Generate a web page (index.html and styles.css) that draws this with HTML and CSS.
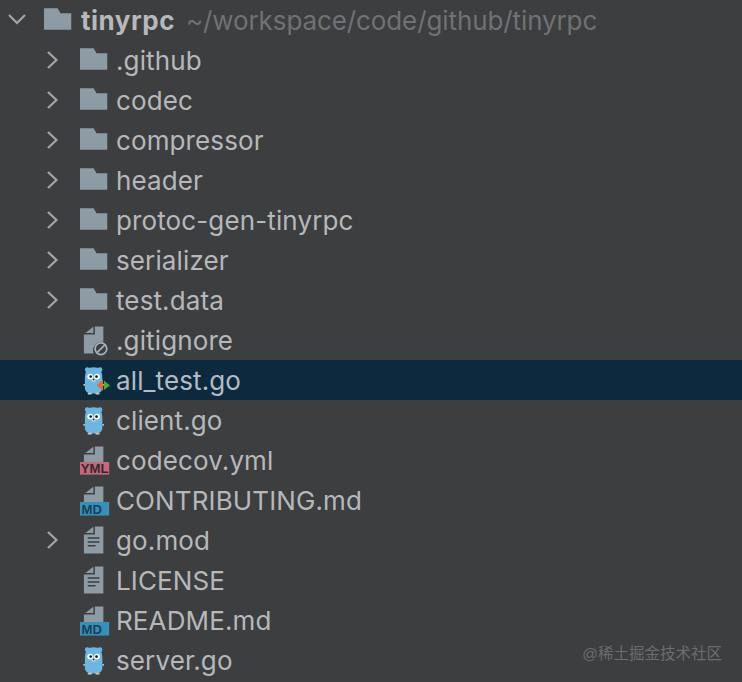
FILE: index.html
```html
<!DOCTYPE html>
<html lang="en">
	<head>
		<meta charset="utf-8"/>
		<title>tinyrpc</title>
		<link rel="stylesheet" href="styles.css">
	</head>
	<body>
		<svg class="defs" width="0" height="0">
			<defs>
				<symbol id="down" viewBox="0 0 44 40"><path d="M9 15 L17 23 L25 15" fill="none" stroke="#a4a7a9" stroke-width="2.2"/></symbol>
				<symbol id="right" viewBox="0 0 44 40"><path d="M12 12 L20.500 20 L12 28" fill="none" stroke="#a4a7a9" stroke-width="2.2"/></symbol>
				<symbol id="folder" viewBox="0 0 37 40"><path d="M0 8 H14 L17 13 H28 V30 H0 Z" fill="#8d9ba4"/></symbol>
				<symbol id="ignore" viewBox="0 0 37 40">
					<path d="M4 14 L14 6 H24 V22 A9 9 0 0 0 14 34 H4 Z" fill="#8d9ba4"/>
					<path d="M3 13.500 H14.500 V5" fill="none" stroke="#3d3e40" stroke-width="1.500"/>
					<circle cx="21.500" cy="29" r="6" fill="none" stroke="#a3b0b8" stroke-width="1.800"/>
					<path d="M17.500 33 L25.500 25" stroke="#a3b0b8" stroke-width="1.800"/>
				</symbol>
				<symbol id="text" viewBox="0 0 37 40">
					<path d="M4 14 L14 6 H24 V34 H4 Z" fill="#8d9ba4"/>
					<path d="M3 13.500 H14.500 V5" fill="none" stroke="#3d3e40" stroke-width="1.500"/>
					<path d="M8 18 H20 M8 22 H20 M8 26 H16" stroke="#3d3e40" stroke-width="1.600"/>
				</symbol>
				<symbol id="yml" viewBox="0 0 37 40">
					<path d="M4 14 L14 6 H24 V22 H4 Z" fill="#8d9ba4"/>
					<path d="M3 13.500 H14.500 V5" fill="none" stroke="#3d3e40" stroke-width="1.500"/>
					<rect x="0" y="22" width="30" height="13" fill="#c4687d"/>
					<text x="15" y="33.500" text-anchor="middle" class="badge" fill="#33282c">YML</text>
				</symbol>
				<symbol id="md" viewBox="0 0 37 40">
					<path d="M4 14 L14 6 H24 V22 H4 Z" fill="#8d9ba4"/>
					<path d="M3 13.500 H14.500 V5" fill="none" stroke="#3d3e40" stroke-width="1.500"/>
					<rect x="0" y="22" width="30" height="14" fill="#3a8fb7"/>
					<text x="12" y="34" text-anchor="middle" class="badge" fill="#173f5c">MD</text>
				</symbol>
				<symbol id="gopher" viewBox="0 0 37 40">
					<circle cx="7.500" cy="9.500" r="2.500" fill="#6cb6e2"/>
					<circle cx="20.500" cy="9.500" r="2.500" fill="#6cb6e2"/>
					<path d="M5 19 C5 10 8 7 14 7 C20 7 23 10 23 19 V28 C23 32 20 34 14 34 C8 34 5 32 5 28 Z" fill="#6cb6e2"/>
					<path d="M5 26 H3.500 V24 H5 Z M23 26 H24.500 V24 H23 Z M8 33 H12 V35 H8 Z M16 33 H20 V35 H16 Z" fill="#d8c9a8"/>
					<circle cx="10.500" cy="16.500" r="3" fill="#fff"/>
					<circle cx="17.500" cy="16.500" r="3" fill="#fff"/>
					<circle cx="11" cy="16.500" r="1.400" fill="#1c1c1c"/>
					<circle cx="17" cy="16.500" r="1.400" fill="#1c1c1c"/>
					<ellipse cx="14" cy="20.500" rx="2" ry="1.300" fill="#e4d6b8"/>
					<circle cx="14" cy="19.800" r="0.800" fill="#222"/>
				</symbol>
			</defs>
		</svg>

		<ul class="tree">
			<li class="row root">
				<svg class="arrow"><use href="#down"/></svg>
				<svg class="icon"><use href="#folder"/></svg>
				<span class="name">tinyrpc</span><span class="path">~/workspace/code/github/tinyrpc</span>
			</li>
			<li class="row">
				<svg class="arrow"><use href="#right"/></svg>
				<svg class="icon"><use href="#folder"/></svg>
				<span>.github</span>
			</li>
			<li class="row">
				<svg class="arrow"><use href="#right"/></svg>
				<svg class="icon"><use href="#folder"/></svg>
				<span>codec</span>
			</li>
			<li class="row">
				<svg class="arrow"><use href="#right"/></svg>
				<svg class="icon"><use href="#folder"/></svg>
				<span>compressor</span>
			</li>
			<li class="row">
				<svg class="arrow"><use href="#right"/></svg>
				<svg class="icon"><use href="#folder"/></svg>
				<span>header</span>
			</li>
			<li class="row">
				<svg class="arrow"><use href="#right"/></svg>
				<svg class="icon"><use href="#folder"/></svg>
				<span>protoc-gen-tinyrpc</span>
			</li>
			<li class="row">
				<svg class="arrow"><use href="#right"/></svg>
				<svg class="icon"><use href="#folder"/></svg>
				<span>serializer</span>
			</li>
			<li class="row">
				<svg class="arrow"><use href="#right"/></svg>
				<svg class="icon"><use href="#folder"/></svg>
				<span>test.data</span>
			</li>
			<li class="row">
				<svg class="arrow"></svg>
				<svg class="icon"><use href="#ignore"/></svg>
				<span>.gitignore</span>
			</li>
			<li class="row selected">
				<svg class="arrow"></svg>
				<svg class="icon" viewBox="0 0 36 40">
					<use href="#gopher" width="36" height="40"/>
					<path d="M23 19.500 L16.500 25 L23 31 Z" fill="#e0703a"/>
					<path d="M24 20.500 L30 25.500 L24 30 Z" fill="#4fa83d"/>
				</svg>
				<span>all_test.go</span>
			</li>
			<li class="row">
				<svg class="arrow"></svg>
				<svg class="icon"><use href="#gopher"/></svg>
				<span>client.go</span>
			</li>
			<li class="row">
				<svg class="arrow"></svg>
				<svg class="icon"><use href="#yml"/></svg>
				<span>codecov.yml</span>
			</li>
			<li class="row">
				<svg class="arrow"></svg>
				<svg class="icon"><use href="#md"/></svg>
				<span>CONTRIBUTING.md</span>
			</li>
			<li class="row">
				<svg class="arrow"><use href="#right"/></svg>
				<svg class="icon"><use href="#text"/></svg>
				<span>go.mod</span>
			</li>
			<li class="row">
				<svg class="arrow"></svg>
				<svg class="icon"><use href="#text"/></svg>
				<span>LICENSE</span>
			</li>
			<li class="row">
				<svg class="arrow"></svg>
				<svg class="icon"><use href="#md"/></svg>
				<span>README.md</span>
			</li>
			<li class="row">
				<svg class="arrow"></svg>
				<svg class="icon"><use href="#gopher"/></svg>
				<span>server.go</span>
			</li>
		</ul>

		<div class="watermark">@稀土掘金技术社区</div>
	</body>
</html>
```

FILE: styles.css
```css
html, body {
	width: 100%; height: 100%;
	padding: 0; border: 0; margin: 0;
	background: #3d3e40;
	overflow: hidden;
}
.defs {
	display: block;
	height: 0;
}
.tree {
	list-style: none;
	margin: 0;
	padding: 0;
	font-family: "Inter", "Liberation Sans", sans-serif;
	font-size: 26px;
	letter-spacing: 0.12px;
	color: #b6b8ba;
}
.row {
	display: flex;
	align-items: center;
	height: 40px;
	padding-left: 36px;
	white-space: nowrap;
}
.root {
	padding-left: 0;
}
.selected {
	background: #0d293e;
	color: #b3bcc4;
}
.arrow {
	flex: none;
	width: 44px;
	height: 40px;
}
.icon {
	flex: none;
	width: 36px;
	height: 40px;
}
.name {
	margin-left: 1px;
	font-weight: 700;
	letter-spacing: 0.5px;
}
.path {
	margin-left: 11px;
	color: #707274;
	letter-spacing: -0.1px;
}
.badge {
	font-family: "Liberation Sans", sans-serif;
	font-size: 13.500px;
	font-weight: 700;
	letter-spacing: 0;
}
.watermark {
	position: absolute;
	right: 20px;
	bottom: 19px;
	font-family: "Liberation Sans", "Noto Sans CJK SC", sans-serif;
	font-size: 15.500px;
	letter-spacing: 0;
	color: #6b6d6f;
}
```
